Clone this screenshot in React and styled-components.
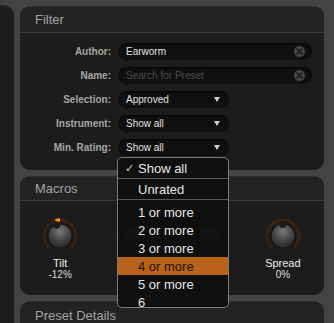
import React from 'react';
import styled, { createGlobalStyle } from 'styled-components';

const GlobalStyle = createGlobalStyle`
  html, body {
    margin: 0;
    padding: 0;
    background: #434343;
    font-family: "Liberation Sans", Arial, sans-serif;
  }
`;

const Page = styled.div`
  display: flex;
  width: 334px;
  height: 323px;
  overflow: hidden;
  background: #434343;
`;

const SidePanel = styled.div`
  width: 14px;
  margin-top: 5px;
  background: #1d1d1d;
  border-top-right-radius: 10px;
  border-top: 1px solid #2c2c2c;
  flex-shrink: 0;
`;

const Column = styled.div`
  flex: 1;
  display: flex;
  flex-direction: column;
  gap: 6px;
  padding: 6px 10px 0 6px;
  min-width: 0;
`;

const Panel = styled.section`
  background: #1c1c1c;
  border-radius: 10px;
  border-top: 1px solid #2e2e2e;
  flex-shrink: 0;
  height: ${(p) => p.$height}px;
  box-sizing: border-box;
  position: relative;
`;

const PanelHeader = styled.div`
  height: ${(p) => p.$height}px;
  display: flex;
  align-items: center;
  padding-left: 15px;
  box-sizing: border-box;
  background: #232323;
  border-top-left-radius: 10px;
  border-top-right-radius: 10px;
  border-bottom: 1px solid #3b3b3b;
  color: #a3a3a3;
  font-size: 13px;
`;

const FilterGrid = styled.div`
  display: grid;
  grid-template-columns: 91px 1fr;
  column-gap: 7px;
  row-gap: 7px;
  grid-auto-rows: 17px;
  padding: 10px 12px 0 0;
  align-items: center;
`;

const Label = styled.div`
  text-align: right;
  font-size: 10px;
  font-weight: bold;
  color: #a6a6a6;
`;

const Field = styled.div`
  position: relative;
  height: 17px;
  width: ${(p) => (p.$narrow ? '111px' : 'auto')};
  background: #101010;
  border-radius: 9px;
  box-shadow: inset 0 1px 2px rgba(0, 0, 0, 0.8);
  display: flex;
  align-items: center;
  padding: 0 6px 0 8px;
  box-sizing: border-box;
  font-size: 10px;
  color: ${(p) => (p.$placeholder ? '#4a4a4a' : '#e2e2e2')};
`;

const FieldText = styled.span`
  flex: 1;
  white-space: nowrap;
`;

const ClearIcon = styled.span`
  width: 11px;
  height: 11px;
  border-radius: 50%;
  background: #474747;
  display: flex;
  align-items: center;
  justify-content: center;
  margin-right: 1px;
`;

const Arrow = styled.span`
  width: 0;
  height: 0;
  border-left: 3.5px solid transparent;
  border-right: 3.5px solid transparent;
  border-top: 5px solid #d0d0d0;
  margin-right: 3px;
`;

const Menu = styled.div`
  position: absolute;
  top: calc(100% + 1px);
  left: -1px;
  width: 112px;
  height: 151px;
  box-sizing: border-box;
  background: rgba(14, 14, 14, 0.93);
  border: 1px solid #7c7c7c;
  border-radius: 5px;
  z-index: 10;
  overflow: hidden;
  font-size: 13px;
  color: #e6e6e6;
`;

const MenuItem = styled.div`
  height: ${(p) => p.$h || 18}px;
  display: flex;
  align-items: center;
  padding-left: 20px;
  position: relative;
  background: ${(p) => (p.$active ? '#b8621c' : 'transparent')};
  color: ${(p) => (p.$active ? '#241404' : '#e6e6e6')};
  border-bottom: ${(p) => (p.$divider ? '1px solid #5a5a5a' : 'none')};
  box-sizing: border-box;
`;

const Check = styled.span`
  position: absolute;
  left: 7px;
  font-family: "DejaVu Sans", sans-serif;
  font-size: 11px;
  color: #cfcfcf;
`;

const MenuSpacer = styled.div`
  height: 3px;
`;

const KnobRow = styled.div`
  display: grid;
  grid-template-columns: repeat(4, 1fr);
  padding: 15px 4px 0 3px;
`;

const KnobCell = styled.div`
  display: flex;
  flex-direction: column;
  align-items: center;
`;

const KnobName = styled.div`
  margin-top: 1px;
  font-size: 11px;
  color: #ececec;
  line-height: 12px;
`;

const KnobValue = styled.div`
  font-size: 10px;
  color: #dcdcdc;
  line-height: 11px;
`;

const polar = (r, deg) => {
  const a = ((deg - 90) * Math.PI) / 180;
  return [20 + r * Math.cos(a), 20 + r * Math.sin(a)];
};

const arc = (r, from, to) => {
  const [x1, y1] = polar(r, from);
  const [x2, y2] = polar(r, to);
  const large = Math.abs(to - from) > 180 ? 1 : 0;
  const sweep = to > from ? 1 : 0;
  return `M${x1} ${y1} A${r} ${r} 0 ${large} ${sweep} ${x2} ${y2}`;
};

const Knob = ({ id, name, value, amount }) => {
  const angle = amount * 135;
  const gid = 'kg' + id;
  return (
    <KnobCell>
      <svg width="40" height="40" viewBox="0 0 40 40">
        <defs>
          <radialGradient id={gid} cx="50%" cy="30%" r="75%">
            <stop offset="0%" stopColor="#7a7a7a" />
            <stop offset="55%" stopColor="#444" />
            <stop offset="100%" stopColor="#262626" />
          </radialGradient>
        </defs>
        <path d={arc(16, -135, 135)} stroke="#3a2211" strokeWidth="3" fill="none" />
        {amount !== 0 && (
          <path d={arc(16, Math.min(0, angle), Math.max(0, angle))} stroke="#f28a1e" strokeWidth="3.5" fill="none" />
        )}
        <circle cx="20" cy="20" r="12.5" fill="#111" />
        <circle cx="20" cy="20" r="11.5" fill={`url(#${gid})`} />
        <g transform={`rotate(${angle} 20 20)`}>
          <circle cx="20" cy="8.5" r="3.6" fill="#1c1c1c" />
        </g>
      </svg>
      {name && <KnobName>{name}</KnobName>}
      {value && <KnobValue>{value}</KnobValue>}
    </KnobCell>
  );
};

const SelectField = ({ children, open }) => (
  <Field $narrow>
    <FieldText>{children}</FieldText>
    <Arrow />
    {open && (
      <Menu>
        <MenuItem $h={21} $divider>
          <Check>✓</Check>Show all
        </MenuItem>
        <MenuItem $h={21} $divider>Unrated</MenuItem>
        <MenuSpacer />
        <MenuItem>1 or more</MenuItem>
        <MenuItem>2 or more</MenuItem>
        <MenuItem>3 or more</MenuItem>
        <MenuItem $active>4 or more</MenuItem>
        <MenuItem>5 or more</MenuItem>
        <MenuItem>6</MenuItem>
      </Menu>
    )}
  </Field>
);

const TextField = ({ value, placeholder }) => (
  <Field $placeholder={!value}>
    <FieldText>{value || placeholder}</FieldText>
    <ClearIcon>
      <svg width="7" height="7" viewBox="0 0 7 7">
        <path d="M1 1L6 6M6 1L1 6" stroke="#1a1a1a" strokeWidth="1.6" strokeLinecap="round" />
      </svg>
    </ClearIcon>
  </Field>
);

export default function App() {
  return (
    <>
      <GlobalStyle />
      <Page>
        <SidePanel />
        <Column>
          <Panel $height={164}>
            <PanelHeader $height={26}>Filter</PanelHeader>
            <FilterGrid>
              <Label>Author:</Label>
              <TextField value="Earworm" />
              <Label>Name:</Label>
              <TextField placeholder="Search for Preset" />
              <Label>Selection:</Label>
              <SelectField>Approved</SelectField>
              <Label>Instrument:</Label>
              <SelectField>Show all</SelectField>
              <Label>Min. Rating:</Label>
              <SelectField open>Show all</SelectField>
            </FilterGrid>
          </Panel>
          <Panel $height={119}>
            <PanelHeader $height={24}>Macros</PanelHeader>
            <KnobRow>
              <Knob id="1" name="Tilt" value="-12%" amount={-0.12} />
              <Knob id="2" amount={0} />
              <Knob id="3" amount={0} />
              <Knob id="4" name="Spread" value="0%" amount={0} />
            </KnobRow>
          </Panel>
          <Panel $height={40}>
            <PanelHeader $height={28}>Preset Details</PanelHeader>
          </Panel>
        </Column>
      </Page>
    </>
  );
}
